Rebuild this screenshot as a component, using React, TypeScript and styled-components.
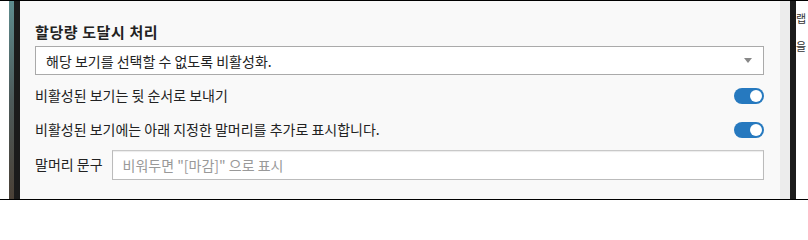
import React from "react";
import styled, { createGlobalStyle } from "styled-components";

const Global = createGlobalStyle`
  html, body { margin: 0; padding: 0; background: #fff; }
  body { font-family: "Noto Sans CJK KR", "Noto Sans", sans-serif; }
  * { box-sizing: border-box; }
`;

const Frame = styled.div`
  width: 808px;
  height: 200px;
  display: flex;
  border-top: 1px solid #000;
  border-bottom: 1px solid #000;
  font-family: "Noto Sans CJK KR", "Noto Sans", sans-serif;
  font-size: 14px;
  color: #222;
  overflow: hidden;
`;

const Strip = styled.div<{ $w: number; $bg: string }>`
  flex: 0 0 ${(p) => p.$w}px;
  background: ${(p) => p.$bg};
`;

const Panel = styled.div`
  flex: 1;
  background: #f9f9f9;
  padding: 21px 16px 0 15px;
  display: flex;
  flex-direction: column;
`;

const Title = styled.div`
  font-weight: 700;
  font-size: 15px;
  letter-spacing: 0.6px;
  line-height: 20px;
  height: 20px;
  color: #222;
`;

const Select = styled.div`
  margin-top: 4px;
  height: 29px;
  border: 1px solid #aaa;
  background: #fff;
  display: flex;
  align-items: center;
  justify-content: space-between;
  padding: 0 11px 0 10px;
  color: #222;
`;

const Caret = styled.span`
  width: 0;
  height: 0;
  border-left: 4.5px solid transparent;
  border-right: 4.5px solid transparent;
  border-top: 5px solid #888;
`;

const Row = styled.div<{ $mt: number }>`
  margin-top: ${(p) => p.$mt}px;
  display: flex;
  align-items: center;
  justify-content: space-between;
  height: 16px;
`;

const RowText = styled.span`
  line-height: 16px;
  margin-bottom: 3px;
  color: #222;
`;

const Toggle = styled.span<{ $on: boolean }>`
  width: 30px;
  height: 16px;
  border-radius: 8px;
  background: ${(p) => (p.$on ? "#2679bf" : "#bbb")};
  display: flex;
  align-items: center;
  justify-content: ${(p) => (p.$on ? "flex-end" : "flex-start")};
  padding: 0 2px;
`;

const Knob = styled.span`
  width: 12px;
  height: 12px;
  border-radius: 50%;
  background: #fff;
`;

const InputRow = styled.div`
  margin-top: 12px;
  display: flex;
  align-items: center;
  gap: 9px;
`;

const Label = styled.span`
  line-height: 16px;
  margin-bottom: 3px;
  white-space: nowrap;
  color: #222;
`;

const TextInput = styled.input`
  flex: 1;
  height: 30px;
  border: 1px solid #bbb;
  border-top-color: #c8c8c8;
  box-shadow: inset 0 1px 1px rgba(0, 0, 0, 0.08);
  background: #fff;
  padding: 0 10px;
  font-family: inherit;
  font-size: 14px;
  color: #222;
  outline: none;
  &::placeholder { color: #999; }
`;

const Edge = styled.div`
  flex: 0 0 12px;
  background: #fff;
  overflow: hidden;
  padding-top: 3px;
  font-size: 11px;
  line-height: 28px;
  color: #333;
  display: flex;
  flex-direction: column;
`;

export default function App() {
  return (
    <>
      <Global />
      <Frame>
        <Strip $w={9} $bg="#fff" />
        <Strip $w={5} $bg="linear-gradient(to bottom, #5e8c8e, #4d5a5a 50%, #4a4036)" />
        <Strip $w={6} $bg="#1b1b1b" />
        <Panel>
          <Title>할당량 도달시 처리</Title>
          <Select>
            <span>해당 보기를 선택할 수 없도록 비활성화.</span>
            <Caret />
          </Select>
          <Row $mt={13}>
            <RowText>비활성된 보기는 뒷 순서로 보내기</RowText>
            <Toggle $on>
              <Knob />
            </Toggle>
          </Row>
          <Row $mt={18}>
            <RowText>비활성된 보기에는 아래 지정한 말머리를 추가로 표시합니다.</RowText>
            <Toggle $on>
              <Knob />
            </Toggle>
          </Row>
          <InputRow>
            <Label>말머리 문구</Label>
            <TextInput placeholder={'비워두면 "[마감]" 으로 표시'} />
          </InputRow>
        </Panel>
        <Strip $w={10} $bg="#ececec" />
        <Strip $w={6} $bg="#1b1b1b" />
        <Edge>
          <span>랩</span>
          <span>을</span>
        </Edge>
      </Frame>
    </>
  );
}
